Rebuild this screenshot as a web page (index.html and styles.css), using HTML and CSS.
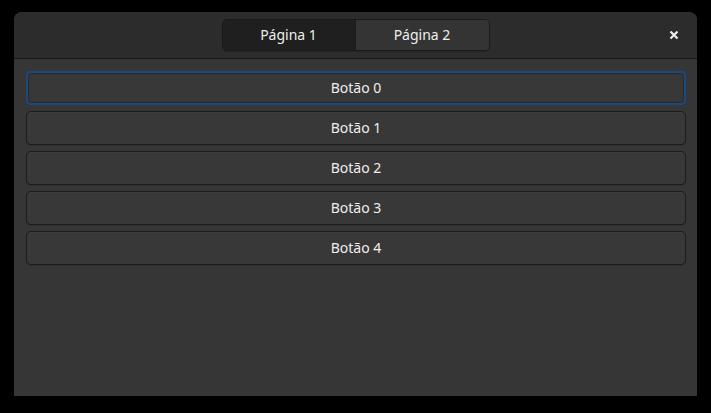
FILE: index.html
```html
<!DOCTYPE html>
<html lang="pt">
<head>
<meta charset="utf-8">
<link rel="stylesheet" href="styles.css">
</head>
<body>
<div class="window">
  <header class="headerbar">
    <div class="spacer"></div>
    <div class="switcher">
      <button class="tab checked">Página 1</button>
      <button class="tab">Página 2</button>
    </div>
    <div class="spacer end">
      <button class="close" aria-label="Fechar">
        <svg width="10" height="10" viewBox="0 0 10 10"><path d="M1.5 1.5 L8.5 8.5 M8.5 1.5 L1.5 8.5" stroke="#eeeeec" stroke-width="2.2" stroke-linecap="butt"/></svg>
      </button>
    </div>
  </header>
  <main class="content">
    <button class="btn focused">Botão 0</button>
    <button class="btn">Botão 1</button>
    <button class="btn">Botão 2</button>
    <button class="btn">Botão 3</button>
    <button class="btn">Botão 4</button>
  </main>
</div>
</body>
</html>
```

FILE: styles.css
```css
html, body {
  margin: 0;
  background: #000;
}
body {
  padding: 12px 0 0 14px;
  font-family: "Noto Sans", "DejaVu Sans", sans-serif;
  font-size: 14px;
  color: #eeeeec;
}
.window {
  width: 683px;
  height: 384px;
  background: #363636;
  border-radius: 8px 8px 0 0;
  overflow: hidden;
  display: flex;
  flex-direction: column;
}
.headerbar {
  height: 46px;
  flex: none;
  background: #2c2c2c;
  border-bottom: 1px solid #171717;
  display: grid;
  grid-template-columns: 1fr auto 1fr;
  align-items: center;
}
.spacer {
  display: flex;
}
.spacer.end {
  justify-content: flex-end;
  padding-right: 6px;
}
.switcher {
  display: flex;
  height: 32px;
  border: 1px solid #1a1a1a;
  border-radius: 5px;
  overflow: hidden;
  box-sizing: border-box;
  box-shadow: 0 1px 1px rgba(0,0,0,0.15);
}
.tab {
  width: 133px;
  border: none;
  margin: 0;
  padding: 0 0 1px;
  font: inherit;
  color: #eeeeec;
  background: #343434;
}
.tab.checked {
  background: #1f1f1f;
  border-right: 1px solid #1a1a1a;
}
.close {
  width: 34px;
  height: 34px;
  border: none;
  background: transparent;
  padding: 0;
  display: flex;
  align-items: center;
  justify-content: center;
}
.close svg {
  display: block;
}
.content {
  flex: 1;
  padding: 12px 11px 0 12px;
  display: flex;
  flex-direction: column;
  gap: 6px;
}
.btn {
  height: 34px;
  font: inherit;
  color: #eeeeec;
  background: #383838;
  border: 1px solid #1c1c1c;
  border-radius: 5px;
  box-shadow: inset 0 1px rgba(255,255,255,0.03), 0 1px 1px rgba(0,0,0,0.12);
  padding: 0 0 2px;
}
.btn.focused {
  border: 2px solid #1e4a7a;
  box-shadow: 0 0 1px 0 rgba(30,80,140,0.6), inset 0 0 1px 1px #262a31;
}
```
